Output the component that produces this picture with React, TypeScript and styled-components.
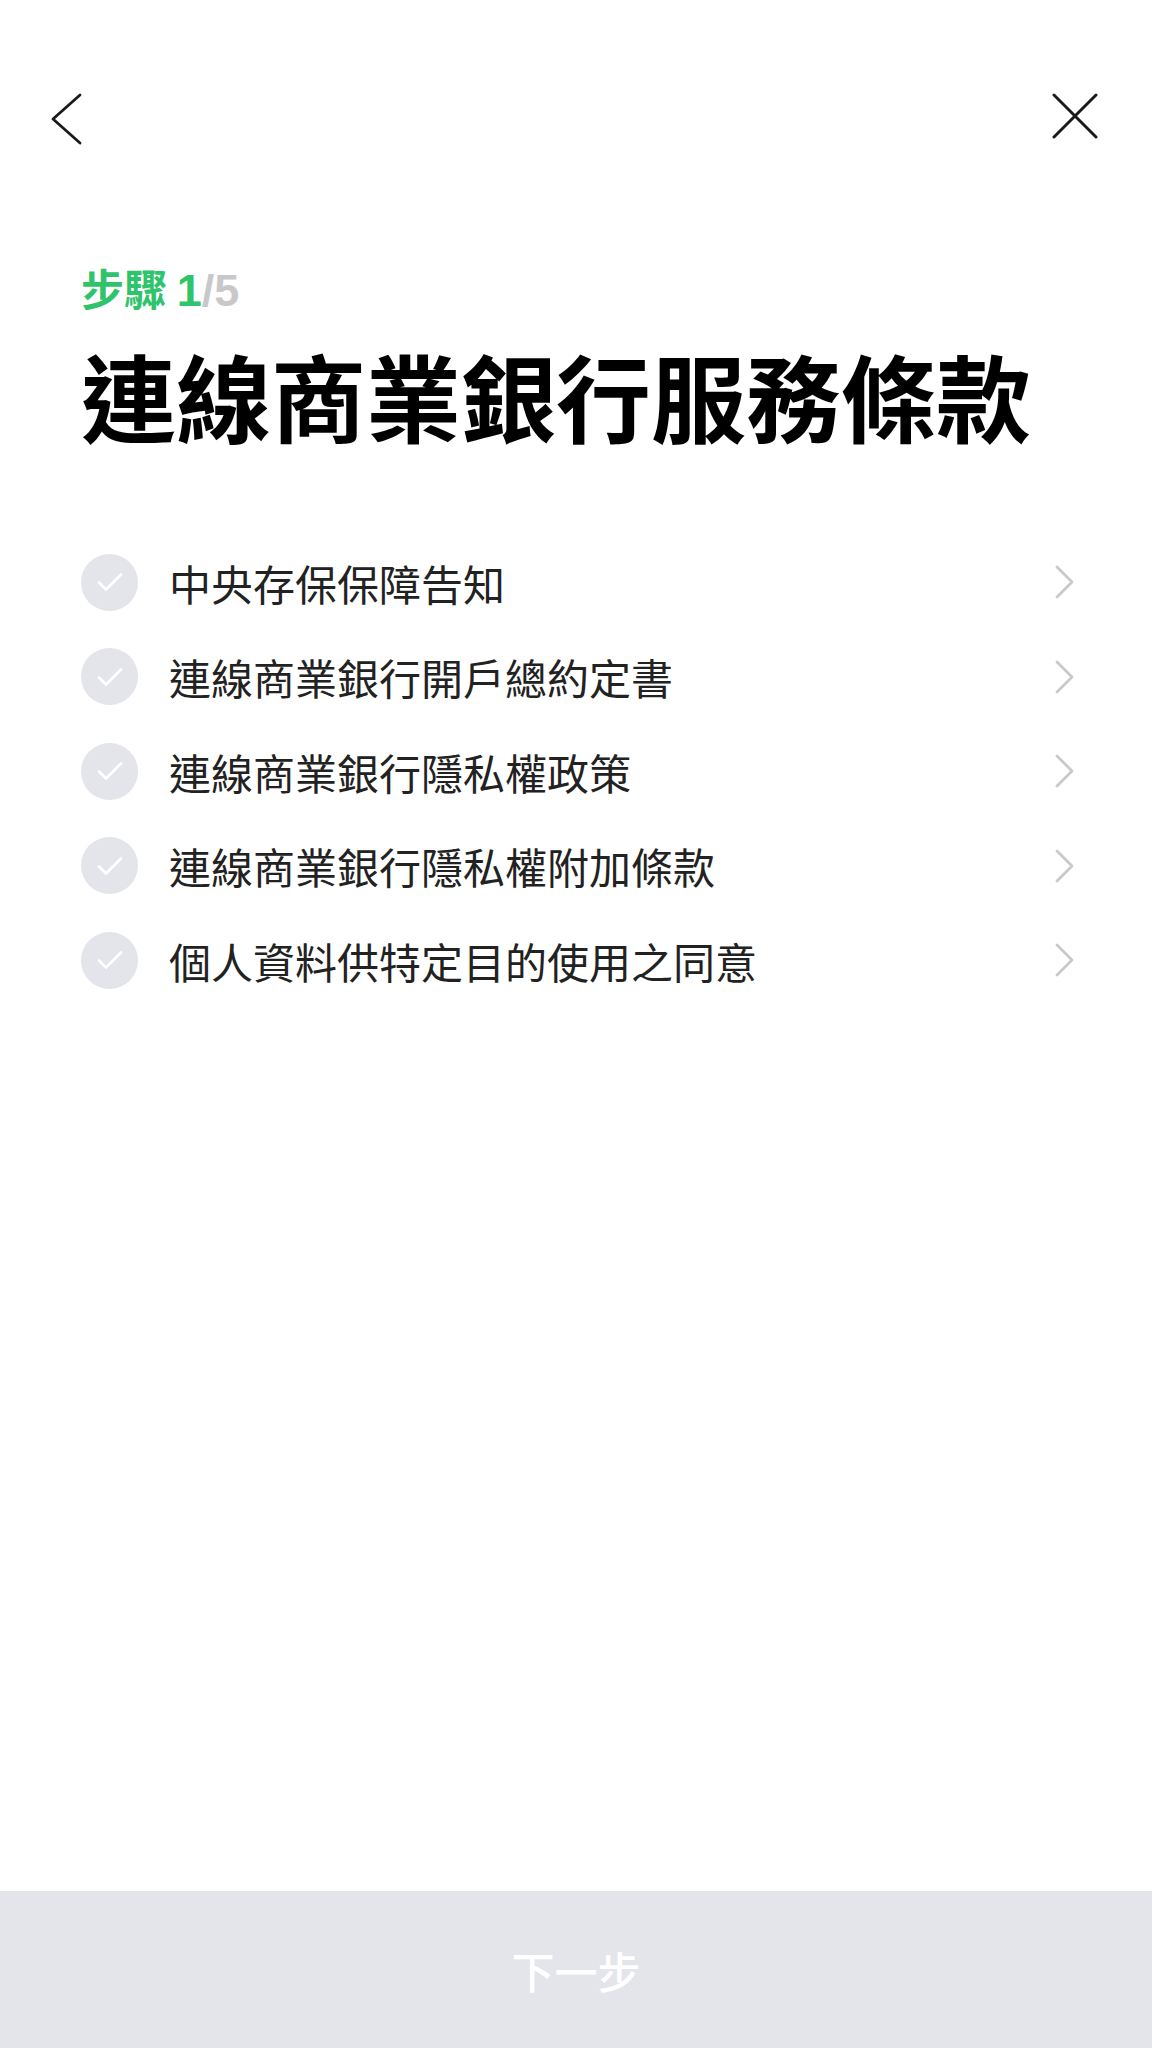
import styled, { createGlobalStyle } from 'styled-components'

const terms = [
  '中央存保保障告知',
  '連線商業銀行開戶總約定書',
  '連線商業銀行隱私權政策',
  '連線商業銀行隱私權附加條款',
  '個人資料供特定目的使用之同意',
]

export default function App() {
  return (
    <Page>
      <GlobalStyle />
      <TopBar>
        <IconButton aria-label="返回">
          <svg width="32" height="52" viewBox="0 0 32 52" fill="none">
            <path d="M29 2 L2 26 L29 50" stroke="#1a1a1a" strokeWidth="2.8" strokeLinecap="round" strokeLinejoin="round" />
          </svg>
        </IconButton>
        <IconButton aria-label="關閉">
          <svg width="46" height="46" viewBox="0 0 46 46" fill="none">
            <path d="M2 2 L44 44 M44 2 L2 44" stroke="#1a1a1a" strokeWidth="3" strokeLinecap="round" />
          </svg>
        </IconButton>
      </TopBar>
      <Content>
        <StepLabel>
          步驟 <Num>1</Num>
          <Num $muted>/5</Num>
        </StepLabel>
        <Title>連線商業銀行服務條款</Title>
        <List>
          {terms.map((t) => (
            <Row key={t}>
              <Check>
                <svg width="26" height="20" viewBox="0 0 26 20" fill="none">
                  <path d="M2 10.5 L9 17.5 L24 2.5" stroke="#fff" strokeWidth="2.6" strokeLinecap="round" strokeLinejoin="round" />
                </svg>
              </Check>
              <RowText>{t}</RowText>
              <svg width="20" height="34" viewBox="0 0 20 34" fill="none">
                <path d="M2 2 L17 17 L2 32" stroke="#c9c9cc" strokeWidth="2.8" strokeLinecap="round" strokeLinejoin="round" />
              </svg>
            </Row>
          ))}
        </List>
      </Content>
      <NextButton>下一步</NextButton>
    </Page>
  )
}

const GlobalStyle = createGlobalStyle`
    body {
        margin: 0;
        background: #fff;
        font-family: "Noto Sans CJK TC", "Noto Sans", sans-serif;
    }
`

const Page = styled.div`
    min-height: 100vh;
    display: flex;
    flex-direction: column;
    background: #fff;
`

//TopBar styled
const TopBar = styled.div`
    display: flex;
    justify-content: space-between;
    align-items: flex-start;
    padding: 93px 54px 0 51px;
`
const IconButton = styled.button`
    border: none;
    background: none;
    padding: 0;
    display: flex;
    cursor: pointer;
`

//Content styled
const Content = styled.div`
    padding: 0 77px 0 81px;
`
const StepLabel = styled.div`
    margin-top: 116px;
    height: 52px;
    font-size: 43px;
    line-height: 52px;
    font-weight: 700;
    color: #2fc46c;
`
const Num = styled.span<{ $muted?: boolean }>`
    font-family: "Liberation Sans", Arial, sans-serif;
    font-size: 45px;
    line-height: 1;
    color: ${(p) => (p.$muted ? '#c8c8cb' : '#2fc46c')};
`
const Title = styled.h1`
    margin: 25px 0 0;
    font-size: 95px;
    line-height: 114px;
    font-weight: 700;
    color: #000;
    white-space: nowrap;
`
const List = styled.div`
    margin-top: 83px;
    display: flex;
    flex-direction: column;
`
const Row = styled.div`
    height: 94.5px;
    display: flex;
    align-items: center;
`
const Check = styled.div`
    width: 57px;
    height: 57px;
    border-radius: 50%;
    background: #e4e4eb;
    display: flex;
    align-items: center;
    justify-content: center;
    flex-shrink: 0;
`
const RowText = styled.span`
    flex: 1;
    margin-left: 31px;
    font-size: 42px;
    color: #222;
`

//NextButton styled
const NextButton = styled.button`
    margin-top: auto;
    height: 157px;
    border: none;
    background: #e4e4eb;
    color: #fff;
    font-family: "Noto Sans CJK TC", sans-serif;
    font-size: 43px;
    font-weight: 500;
`
